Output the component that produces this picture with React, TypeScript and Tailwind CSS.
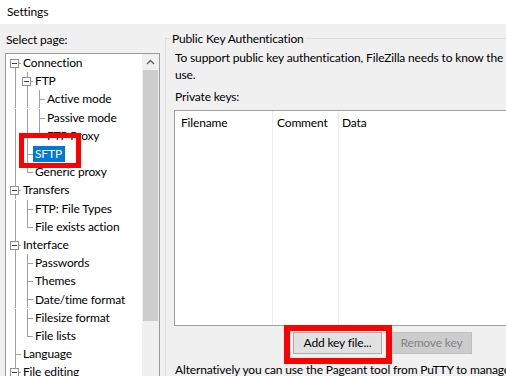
// FileZilla "Settings" dialog, SFTP page, with the two red callout boxes.

type TreeNode = {
  label: string;
  depth: number;
  anc: boolean[];
  exp?: boolean;
  first?: boolean;
  last?: boolean;
  sel?: boolean;
};

const TREE: TreeNode[] = [
  { label: "Connection", depth: 0, anc: [], exp: true, first: true },
  { label: "FTP", depth: 1, anc: [true], exp: true },
  { label: "Active mode", depth: 2, anc: [true, true] },
  { label: "Passive mode", depth: 2, anc: [true, true] },
  { label: "FTP Proxy", depth: 2, anc: [true, true], last: true },
  { label: "SFTP", depth: 1, anc: [true], sel: true },
  { label: "Generic proxy", depth: 1, anc: [true], last: true },
  { label: "Transfers", depth: 0, anc: [], exp: true },
  { label: "FTP: File Types", depth: 1, anc: [true] },
  { label: "File exists action", depth: 1, anc: [true], last: true },
  { label: "Interface", depth: 0, anc: [], exp: true },
  { label: "Passwords", depth: 1, anc: [true] },
  { label: "Themes", depth: 1, anc: [true] },
  { label: "Date/time format", depth: 1, anc: [true] },
  { label: "Filesize format", depth: 1, anc: [true] },
  { label: "File lists", depth: 1, anc: [true], last: true },
  { label: "Language", depth: 0, anc: [] },
  { label: "File editing", depth: 0, anc: [], exp: true },
];

const LINE = "#a0a0a0";

function TreeRow({ node }: { node: TreeNode }) {
  const d = node.depth;
  const w = 15 + 12 * d;
  const x = 9.5 + 12 * d;
  return (
    <div className="flex h-[18.2px] items-center">
      <svg width={w} className="h-full shrink-0" shapeRendering="crispEdges">
        {node.anc.map((on, l) =>
          on ? <line key={l} x1={9.5 + 12 * l} x2={9.5 + 12 * l} y1="0" y2="100%" stroke={LINE} /> : null,
        )}
        <line x1={x} x2={x} y1={node.first ? 9.5 : 0} y2={node.last ? 9.5 : "100%"} stroke={LINE} />
        <line x1={x} x2={w} y1="9.5" y2="9.5" stroke={LINE} />
        {node.exp && (
          <g>
            <rect x={4.5 + 12 * d} y="5.5" width="8" height="8" fill="#ffffff" stroke="#919191" />
            <line x1={6 + 12 * d} x2={11 + 12 * d} y1="9.5" y2="9.5" stroke="#404040" />
          </g>
        )}
      </svg>
      <span
        className={`whitespace-nowrap leading-[16px] ${
          node.sel ? "bg-[#0078d7] pl-[2px] pr-[3px] text-white" : "px-[2px]"
        }`}
      >
        {node.label}
      </span>
    </div>
  );
}

export default function App() {
  return (
    <div className="relative h-[376px] w-[506px] overflow-hidden bg-[#f0f0f0] font-['Lato','Segoe_UI',sans-serif] text-[12px] leading-[16px] tracking-[-0.15px] text-black">
      <div className="flex h-[24px] items-center bg-white pl-[7px]">Settings</div>

      <div className="flex h-[352px]">
        {/* left: page tree */}
        <div className="flex w-[160px] shrink-0 flex-col pl-[5px]">
          <div className="h-[24px] pl-[1px] pt-[8px]">Select page:</div>
          <div className="mt-[5px] flex h-[340px] border border-[#9a9a9a] bg-white">
            <div className="min-w-0 flex-1 overflow-hidden">
              {TREE.map((n) => (
                <TreeRow key={n.label} node={n} />
              ))}
            </div>
            <div className="flex w-[17px] shrink-0 flex-col bg-[#f0f0f0]">
              <div className="flex h-[16px] items-center justify-center">
                <svg width="9" height="6" viewBox="0 0 9 6">
                  <path d="M1 5 L4.5 1.5 L8 5" fill="none" stroke="#606060" strokeWidth="1.3" />
                </svg>
              </div>
              <div className="mx-[1px] h-[251px] bg-[#cdcdcd]" />
            </div>
          </div>
        </div>

        {/* right: SFTP page */}
        <div className="min-w-0 flex-1 pl-[5px]">
          <div className="mt-[14px] w-[420px] border-l border-t border-[#dcdcdc]">
            <div className="-mt-[8px] h-[16px]">
              <span className="ml-[5px] inline-block bg-[#f0f0f0] px-[1px]">Public Key Authentication</span>
            </div>
            <div className="pl-[8px] pt-[2px]">
              <div className="whitespace-nowrap pl-[1px] leading-[17px]">
                <div>To support public key authentication, FileZilla needs to know the private keys to</div>
                <div>use.</div>
              </div>
              <div className="mt-[6px] pl-[1px]">Private keys:</div>
              <div className="mt-[5px] flex h-[216px] w-[420px] border border-[#a0a0a0] bg-white">
                <div className="w-[98px] shrink-0 border-r border-[#eaeef3]">
                  <div className="flex h-[24px] items-center pl-[6px]">Filename</div>
                </div>
                <div className="w-[66px] shrink-0 border-r border-[#eaeef3]">
                  <div className="flex h-[24px] items-center pl-[4px]">Comment</div>
                </div>
                <div className="flex-1">
                  <div className="flex h-[24px] items-center pl-[3px]">Data</div>
                </div>
              </div>
              <div className="mt-[6px] flex gap-[9px] pl-[119px]">
                <button className="h-[22px] w-[89px] border border-[#adadad] bg-[#e1e1e1]">Add key file...</button>
                <button disabled className="h-[22px] w-[81px] border border-[#bfbfbf] bg-[#cccccc] text-[#838383]">
                  Remove key
                </button>
              </div>
              <div className="mt-[8px] whitespace-nowrap pl-[1px]">
                Alternatively you can use the Pageant tool from PuTTY to manage your keys.
              </div>
            </div>
          </div>
        </div>
      </div>

      {/* red callouts */}
      <div className="absolute left-[19px] top-[133px] h-[35px] w-[62px] border-[5px] border-[#ff0000]" />
      <div className="absolute left-[284px] top-[325px] h-[39px] w-[108px] border-[6px] border-[#ff0000]" />
    </div>
  );
}
